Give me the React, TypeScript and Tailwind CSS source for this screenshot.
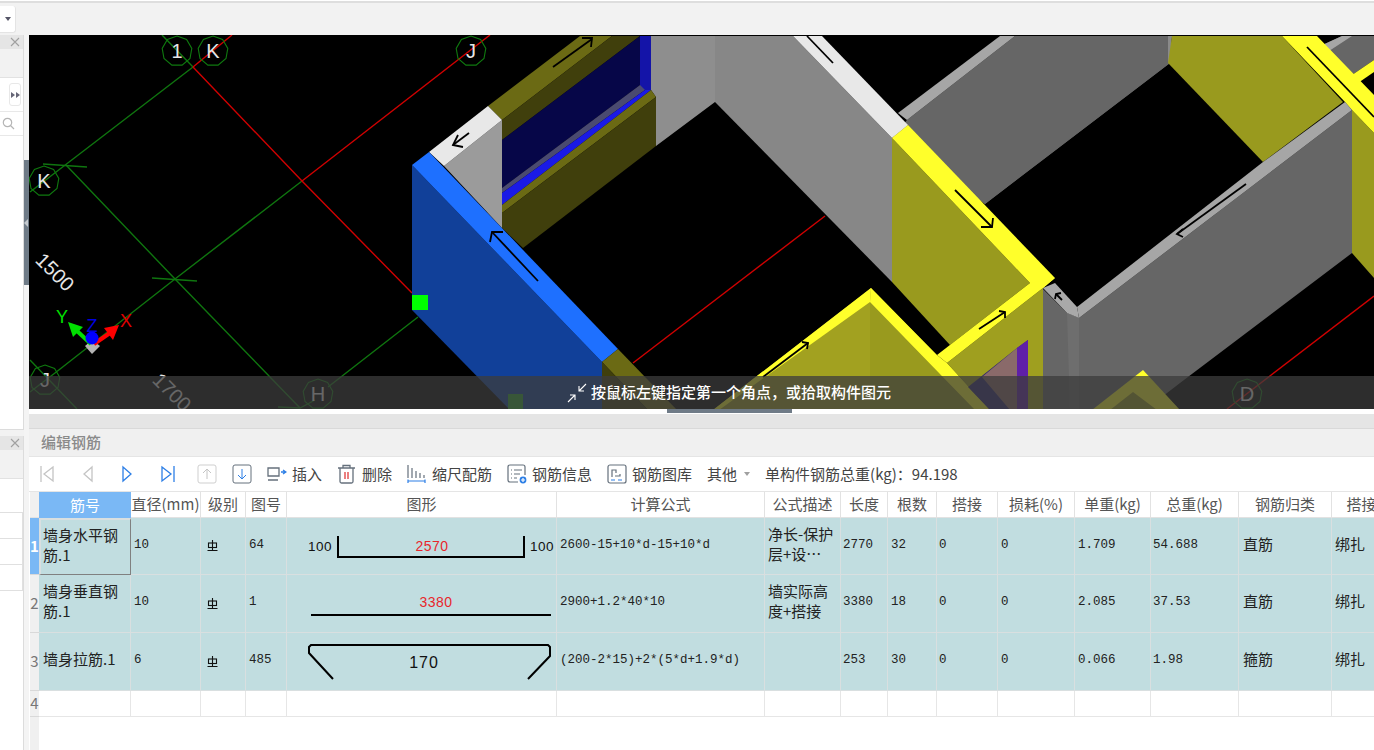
import React from 'react';

const octagon = (cx: number, cy: number, r: number) =>
    Array.from({ length: 9 }, (_, i) => {
        const a = (Math.PI * 2 * i) / 9 - Math.PI / 2;
        return `${(cx + r * Math.cos(a)).toFixed(1)},${(cy + r * Math.sin(a)).toFixed(1)}`;
    }).join(' ');

const greenLines = [
    '162,35 193,67', '193,67 30,192', '302,181 175,279 55,373 30,392', '43,164 87,167', '66,165 175,279 300,408',
    '152,278 197,281', '30,360 77,409', '328,387 418,317', '278,407 300,408 315,400',
];
const redLines = [
    '232,35 193,67', '193,67 302,181 412,293', '302,181 490,35', '633,363 825,216', '1227,409 1374,296',
];
const labels: [number, number, string][] = [
    [177, 51, '1'], [213, 51, 'K'], [471, 51, 'J'], [44, 181, 'K'], [45, 380, 'J'], [318, 394, 'H'], [1247, 394, 'D'],
];

const walls: [string, string][] = [
    // grey walls at the back
    ['651,36 715,36 715,102 656,146 656,97 651,90', '#8e8e8e'],
    ['715,36 793,36 892,138 892,282 715,102', '#878787'],
    ['907,120 1168,36 1170,63 985,204 892,138', '#666666'],
    ['1000,36 1170,36 1170,63 985,204 905,125 907,120 1015,36', '#666666'],
    ['898,113 1000,36 1015,36 907,120', '#a6a6a6'],
    ['1168,36 1172,36 1170,63 1168,63', '#8a8a8a'],
    ['793,36 822,36 908,125 892,138', '#e8e8e8'],
    // olive wall on the right
    ['1172,36 1282,36 1343,102 1263,162 1168,63', '#999a1e'],
    ['1342,36 1374,36 1374,60 1352,75 1318,47', '#666666'],
    ['1318,47 1342,36 1352,36 1326,53', '#a6a6a6'],
    ['1352,110 1374,133 1374,278 1352,253', '#999a1e'],
    ['1282,36 1317,36 1374,95 1374,133 1352,110 1345,102', '#ffff2b'],
    ['1374,60 1352,75 1358,83 1374,72', '#ffff2b'],
    // long grey wall
    ['1079,318 1352,110 1352,253 1180,383 1145,410 1079,410', '#666666'],
    ['1077,307 1263,162 1345,102 1352,110 1079,318', '#a6a6a6'],
    ['1042,288 1067,313 1079,318 1079,410 1042,410', '#666666'],
    ['1067,313 1079,318 1079,410 1070,410', '#6e6e6e'],
    ['1043,288 1055,283 1077,307 1079,318 1067,313', '#a9a9a9'],
    // yellow wall
    ['892,138 1030,283 950,345 892,282', '#999a1e'],
    ['908,125 1055,278 1043,288 1030,283 892,138', '#ffff2b'],
    // lower yellow rooms
    ['871,288 990,410 713,410', '#a2a120'],
    ['870,302 975,410 870,410', '#999a1e'],
    ['947,363 1043,288 1043,410 990,410', '#9f9f1f'],
    ['871,288 713,410 719,410 870,302', '#ffff2b'],
    ['871,288 937,355 947,363 990,410 975,410 870,302', '#ffff2b'],
    ['937,355 1030,283 1055,278 1043,288 947,363', '#ffff2b'],
    ['968,387 1017,348 1028,340 1028,410 990,410', '#2e2570'],
    ['982,377 1017,348 1017,410 1010,410', '#8a6a6a'],
    ['1017,348 1028,340 1028,410 1017,410', '#5f1fa8'],
    ['1143,370 1092,410 1180,410', '#ffff2b'],
    ['1133,392 1110,410 1157,410', '#999a1e'],
    // window wall
    ['488,106 580,36 612,36 502,120', '#6b6a14'],
    ['502,120 612,36 640,36 502,140', '#403f0c'],
    ['502,140 640,36 640,85 502,188', '#060648'],
    ['640,36 651,36 651,90 640,90', '#1414a8'],
    ['502,188 640,85 645,90 502,193', '#4a4a70'],
    ['502,193 645,90 651,90 502,205', '#1a1ae6'],
    ['502,205 651,90 656,97 502,213', '#6b6a14'],
    ['502,213 656,97 656,146 523,248 502,228', '#403f0c'],
    // blue end
    ['444,166 502,120 502,228', '#9b9b9b'],
    ['429,152 488,106 502,120 444,166', '#e8e8e8'],
    ['412,165 602,362 602,410 510,410 412,310', '#114099'],
    ['412,165 429,152 618,349 602,362', '#1e70ff'],
    ['602,362 618,349 677,410 648,410', '#6b6a14'],
    ['602,362 648,410 602,410', '#403f0c'],
];

const arrows = [
    ['553,67 592,39'], ['582,38 592,38 591,47'],
    ['469,133 453,145'], ['458,135 453,145 463,147'],
    ['538,281 492,232'], ['503,232 492,232 490,242'],
    ['807,36 833,63'],
    ['955,190 992,227'], ['993,218 992,227 981,227'],
    ['1246,184 1177,234'], ['1183,229 1177,234 1183,237'],
    ['979,329 1005,312'], ['999,311 1005,312 1005,318'],
    ['763,377 808,343'], ['802,342 808,343 807,349'],
    ['1307,47 1374,117'],
    ['1056,294 1062,300'], ['1055,299 1056,294 1061,293'],
];

const Viewport = () => (
    <div className="relative h-[374px] bg-black overflow-hidden">
        <svg viewBox="29 35 1345 374" className="block w-full h-full">
            {greenLines.map((p) => <polyline key={p} points={p} fill="none" stroke="#0f750f" strokeWidth="1.4" />)}
            {redLines.map((p) => <polyline key={p} points={p} fill="none" stroke="#d00000" strokeWidth="1.4" />)}
            {walls.map(([p, c], i) => <polygon key={i} points={p} fill={c} />)}
            {arrows.map(([p], i) => <polyline key={i} points={p} fill="none" stroke="#000" strokeWidth="1.8" />)}
            <rect x="412" y="295" width="16" height="15" fill="#00ff00" />
            <rect x="508" y="394" width="15" height="16" fill="#2fa52f" />
            {labels.map(([x, y, t]) => (
                <g key={`${x}${t}`}>
                    <polygon points={octagon(x, y, 15)} fill="none" stroke="#0f7a0f" strokeWidth="1.1" />
                    <text x={x} y={y + 7} textAnchor="middle" fontSize="20" fill="#e6e6e6" fontFamily="Liberation Sans">{t}</text>
                </g>
            ))}
            <text x="55" y="279" transform="rotate(45 55 272)" textAnchor="middle" fontSize="20" fill="#e6e6e6" fontFamily="Liberation Sans">1500</text>
            <text x="172" y="399" transform="rotate(45 172 392)" textAnchor="middle" fontSize="20" fill="#e6e6e6" fontFamily="Liberation Sans">1700</text>
            {/* axis gizmo */}
            <polygon points="92,340 100,346 92,354 85,346" fill="#b5b5b5" />
            <line x1="91" y1="344" x2="76" y2="330" stroke="#00e000" strokeWidth="4" />
            <polygon points="68,322 83,327 73,337" fill="#00e000" />
            <line x1="94" y1="344" x2="110" y2="333" stroke="#ff0000" strokeWidth="4" />
            <polygon points="119,325 113,340 104,328" fill="#ff0000" />
            <circle cx="92" cy="338" r="6.5" fill="#0000ff" />
            <text x="62" y="323" textAnchor="middle" fontSize="18" fill="#00e000" fontFamily="Liberation Sans">Y</text>
            <text x="92" y="332" textAnchor="middle" fontSize="18" fill="#0000e0" fontFamily="Liberation Sans">Z</text>
            <text x="126" y="327" textAnchor="middle" fontSize="18" fill="#e00000" fontFamily="Liberation Sans">X</text>
        </svg>
        <div className="absolute left-0 right-0 bottom-0 h-[33px] bg-[#3c3c3c]/75 flex items-center pl-[538px] gap-[4px] text-white text-[15px] font-medium">
            <svg width="20" height="20" viewBox="0 0 20 20" fill="none" stroke="#fff" strokeWidth="1.1">
                <path d="M1 19 L8 12 M3 12 H8 V17 M19 1 L12 8 M12 3 V8 H17" />
            </svg>
            <span>按鼠标左键指定第一个角点，或拾取构件图元</span>
        </div>
    </div>
);

const PanelHead = () => (
    <div className="h-[14px] bg-[#e5e5e5] flex items-center justify-end pr-[3px]">
        <svg width="10" height="10" viewBox="0 0 10 10" stroke="#a0a0a0" strokeWidth="1.1"><path d="M1 1 L9 9 M9 1 L1 9" /></svg>
    </div>
);

const SidePanels = () => (
    <div className="w-[24px] flex flex-col bg-[#f2f2f2] shrink-0">
        <div className="h-[395px] flex flex-col bg-white border-r border-b border-[#dcdcdc]">
            <PanelHead />
            <div className="h-[29px] bg-[#f2f2f2] border-b border-[#e2e2e2]" />
            <div className="h-[34px] border-b border-[#e8e8e8] flex justify-end items-center pr-[2px]">
                <div className="w-[12px] h-[23px] bg-white border border-[#e8e8e8] rounded-[3px] flex items-center justify-center">
                    <svg width="9" height="6" viewBox="0 0 9 6" fill="#667"><path d="M0 0 L4 3 L0 6Z M5 0 L9 3 L5 6Z" /></svg>
                </div>
            </div>
            <div className="h-[24px] border-b border-[#e8e8e8] flex items-center pl-[2px]">
                <svg width="13" height="13" viewBox="0 0 13 13" fill="none" stroke="#b5b5b5" strokeWidth="1.2"><circle cx="5.5" cy="5.5" r="4.2" /><path d="M8.5 8.5 L12 12" /></svg>
            </div>
        </div>
        <div className="mt-[6px] flex-1 flex flex-col bg-white border-r border-[#dcdcdc]">
            <PanelHead />
            <div className="h-[29px] bg-[#f2f2f2] border-b border-[#e2e2e2]" />
            <div className="h-[34px] border-b border-[#e0e0e0]" />
            <div className="h-[26px] border-b border-r border-[#e0e0e0]" />
            <div className="h-[26px] border-b border-r border-[#e0e0e0]" />
            <div className="h-[26px] border-b border-r border-[#e0e0e0]" />
        </div>
    </div>
);

const Splitter = () => (
    <div className="w-[5px] shrink-0 bg-[#f4f4f4]">
        <div className="mt-[125px] h-[125px] bg-[#6f7b87] flex items-center">
            <svg width="5" height="8" viewBox="0 0 5 8" fill="#c4c9ce"><path d="M4 0 V8 L0 4Z" /></svg>
        </div>
    </div>
);

const Tool = ({ icon, label, wide }: any) => (
    <div className={`flex items-center ${wide ? 'gap-[6px]' : 'gap-[5px]'}`}>
        {icon}
        <span>{label}</span>
    </div>
);

const blue = '#2d7fe6';
const off = '#c4c4c4';

const Toolbar = () => (
    <div className="h-[34px] bg-white flex items-center pl-[11px] text-[15px] text-[#444] whitespace-nowrap">
        <svg width="14" height="18" viewBox="0 0 14 18" fill="none" stroke={off} strokeWidth="1.3" className="mr-[29px]"><path d="M1 1 V17 M13 2 L4 9 L13 16Z" /></svg>
        <svg width="10" height="18" viewBox="0 0 10 18" fill="none" stroke={off} strokeWidth="1.3" className="mr-[29px]"><path d="M9 2 L1 9 L9 16Z" /></svg>
        <svg width="10" height="18" viewBox="0 0 10 18" fill="none" stroke={blue} strokeWidth="1.3" className="mr-[29px]"><path d="M1 2 L9 9 L1 16Z" /></svg>
        <svg width="14" height="18" viewBox="0 0 14 18" fill="none" stroke={blue} strokeWidth="1.3" className="mr-[22px]"><path d="M13 1 V17 M1 2 L10 9 L1 16Z" /></svg>
        <svg width="20" height="20" viewBox="0 0 20 20" fill="none" className="mr-[15px]"><rect x="1" y="1" width="18" height="18" rx="2" stroke="#cfcfcf" /><path d="M10 15 V5 M6 9 L10 5 L14 9" stroke={off} /></svg>
        <svg width="20" height="20" viewBox="0 0 20 20" fill="none" className="mr-[15px]"><rect x="1" y="1" width="18" height="18" rx="2" stroke="#65707c" /><path d="M10 5 V15 M6 11 L10 15 L14 11" stroke={blue} /></svg>
        <div className="flex items-center gap-[15px]">
            <Tool
                label="插入"
                icon={<svg width="20" height="18" viewBox="0 0 20 18" fill="none" strokeWidth="1.3"><path d="M6 3 H1 V11 H12 V3 H6 M1 15 H11" stroke="#65707c" /><path d="M14 7 H18 M16 5 L19 7 L16 9" stroke={blue} /></svg>}
            />
            <Tool
                wide
                label="删除"
                icon={<svg width="19" height="20" viewBox="0 0 19 20" fill="none" strokeWidth="1.3" stroke="#65707c"><path d="M1 4 H18 M6 4 V1.5 H13 V4 M3 4 V17.5 Q3 19 4.5 19 H14.5 Q16 19 16 17.5 V4" /><path d="M8 8 V15 M11 8 V15" stroke="#e03c3c" /></svg>}
            />
            <Tool
                wide
                label="缩尺配筋"
                icon={<svg width="19" height="20" viewBox="0 0 19 20" fill="none" strokeWidth="1.2"><path d="M1 1 V14 M5 4 V14 M9 7 V14 M13 9 V14 M17 11 V14" stroke="#65707c" /><path d="M1 17 H18 M1 15.5 V19 M18 15.5 V19" stroke={blue} /></svg>}
            />
            <Tool
                label="钢筋信息"
                icon={<svg width="20" height="20" viewBox="0 0 20 20" fill="none" strokeWidth="1.2"><path d="M11 18 H3 Q1 18 1 16 V3 Q1 1 3 1 H16 Q18 1 18 3 V11" stroke="#65707c" /><path d="M4 6 H5 M7 6 H15 M4 10 H5 M7 10 H13 M4 14 H5 M7 14 H10" stroke="#65707c" /><circle cx="16" cy="16" r="3.4" fill={blue} stroke="none" /><path d="M16 14 V18 M14 16 H18" stroke="#fff" /></svg>}
            />
            <Tool
                label="钢筋图库"
                icon={<svg width="20" height="20" viewBox="0 0 20 20" fill="none" strokeWidth="1.2"><rect x="1" y="1" width="18" height="18" rx="2" stroke="#65707c" /><path d="M5 13 V6 H9 V9 M8 12 H13 V10" stroke="#65707c" /><path d="M4 16 H8 M11 16 H15" stroke={blue} /></svg>}
            />
            <div className="flex items-center gap-[7px]">
                <span>其他</span>
                <svg width="6" height="4" viewBox="0 0 6 4" fill="#a0a0a0"><path d="M0 0 H6 L3 4Z" /></svg>
            </div>
            <span>单构件钢筋总重(kg)：94.198</span>
        </div>
    </div>
);

const GradeMark = () => (
    <svg width="11" height="12" viewBox="0 0 11 12" fill="none" stroke="#111" strokeWidth="1.1">
        <rect x="1.5" y="3" width="8" height="4.5" />
        <path d="M5.5 0 V10 M0.5 10.5 H10.5" />
    </svg>
);

const Figure1 = () => (
    <svg width="270" height="57" viewBox="286 517 270 57" className="shrink-0">
        <text x="307" y="550" fontSize="13.5" letterSpacing="0.5" fill="#111" fontFamily="Liberation Sans">100</text>
        <path d="M337 535 V556 H523 V535" fill="none" stroke="#000" strokeWidth="2" />
        <text x="431" y="550" textAnchor="middle" fontSize="14" letterSpacing="0.5" fill="#e8262c" fontFamily="Liberation Sans">2570</text>
        <text x="529" y="550" fontSize="13.5" letterSpacing="0.5" fill="#111" fontFamily="Liberation Sans">100</text>
    </svg>
);

const Figure2 = () => (
    <svg width="270" height="58" viewBox="286 574 270 58" className="shrink-0">
        <text x="435" y="606" textAnchor="middle" fontSize="14" letterSpacing="0.5" fill="#e8262c" fontFamily="Liberation Sans">3380</text>
        <path d="M310 614 H550" stroke="#000" strokeWidth="2" />
    </svg>
);

const Figure3 = () => (
    <svg width="270" height="58" viewBox="286 632 270 58" className="shrink-0">
        <path d="M332 678 L308 652 L308 646 L310 644 H547 L549 646 L549 655 L527 678" fill="none" stroke="#000" strokeWidth="2" />
        <text x="423" y="667" textAnchor="middle" fontSize="16" letterSpacing="1" fill="#111" fontFamily="Liberation Sans">170</text>
    </svg>
);

const mono = "font-['Liberation_Mono','Noto_Sans_CJK_SC',monospace] text-[12.5px] pb-[2px]";
const cjk = 'text-[15px] leading-[20px] pb-[5px]';

const Cell = ({ children, kind, className = '' }: any) => (
    <div className={`border-r border-b border-[#d9dfe0] bg-[#c1dde0] flex items-center overflow-hidden text-[#222] ${kind === 'cjk' ? cjk : kind === 'fig' ? '' : mono} ${className}`}>
        {children}
    </div>
);

const headers = ['直径(mm)', '级别', '图号', '图形', '计算公式', '公式描述', '长度', '根数', '搭接', '损耗(%)', '单重(kg)', '总重(kg)', '钢筋归类', '搭接'];

const rows = [
    { n: '墙身水平钢筋.1', d: '10', no: '64', fig: <Figure1 />, calc: '2600-15+10*d-15+10*d', desc: '净长-保护层+设…', len: '2770', qty: '32', unit: '1.709', total: '54.688', kind: '直筋' },
    { n: '墙身垂直钢筋.1', d: '10', no: '1', fig: <Figure2 />, calc: '2900+1.2*40*10', desc: '墙实际高度+搭接', len: '3380', qty: '18', unit: '2.085', total: '37.53', kind: '直筋' },
    { n: '墙身拉筋.1', d: '6', no: '485', fig: <Figure3 />, calc: '(200-2*15)+2*(5*d+1.9*d)', desc: '', len: '253', qty: '30', unit: '0.066', total: '1.98', kind: '箍筋' },
];

const Grid = () => (
    <div className="grid grid-cols-[9px_92px_70px_45px_41px_270px_208px_76px_47px_49px_61px_77px_76px_88px_93px_60px] grid-rows-[26px_57px_58px_58px_26px] w-[1400px]">
        <div className="bg-[#f0f0f0] border-b border-[#e2e2e2]" />
        <div className="bg-[#7ab8f5] text-white text-[15px] flex items-center justify-center">筋号</div>
        {headers.map((h, i) => (
            <div key={i} className="bg-white border-r border-b border-[#e2e2e2] text-[15px] text-[#555] flex items-center justify-center whitespace-nowrap">{h}</div>
        ))}

        {rows.map((r, i) => (
            <React.Fragment key={i}>
                <div className={`border-b border-[#d9d9d9] flex items-center justify-center text-[15px] ${i === 0 ? 'bg-[#7ab8f5] text-white font-bold' : 'bg-[#f0f0f0] text-[#777]'}`}>{i + 1}</div>
                <Cell kind="cjk" className={i === 0 ? 'pl-[2px] border-2 border-[#c4d0d2] border-r-[#808080] border-b-[#808080]' : 'pl-[4px]'}>{r.n}</Cell>
                <Cell className="pl-[3px]">{r.d}</Cell>
                <Cell kind="fig" className="pl-[6px]"><GradeMark /></Cell>
                <Cell className="pl-[3px]">{r.no}</Cell>
                <Cell kind="fig">{r.fig}</Cell>
                <Cell className="pl-[3px] whitespace-nowrap">{r.calc}</Cell>
                <Cell kind="cjk" className="pl-[3px]">{r.desc}</Cell>
                <Cell className="pl-[2px]">{r.len}</Cell>
                <Cell className="pl-[3px]">{r.qty}</Cell>
                <Cell className="pl-[2px]">0</Cell>
                <Cell className="pl-[3px]">0</Cell>
                <Cell className="pl-[3px]">{r.unit}</Cell>
                <Cell className="pl-[2px]">{r.total}</Cell>
                <Cell kind="cjk" className="pl-[4px]">{r.kind}</Cell>
                <Cell kind="cjk" className="pl-[3px]">绑扎</Cell>
            </React.Fragment>
        ))}

        <div className="bg-[#f0f0f0] border-b border-[#d9d9d9] flex items-center justify-center text-[15px] text-[#777]">4</div>
        {headers.concat('').map((_, i) => (
            <div key={i} className="bg-white border-r border-b border-[#e6e6e6]" />
        ))}
    </div>
);

export default function App() {
    return (
        <div className="w-[1374px] h-[750px] overflow-hidden flex flex-col bg-white font-['Noto_Sans_CJK_SC','Liberation_Sans',sans-serif]">
            <div className="h-[35px] shrink-0 bg-[#f2f2f2] border-t-2 border-[#dedede] mt-[1px] flex items-center">
                <div className="w-[16px] h-[27px] bg-white rounded-r-[3px] border-r border-b border-[#e4e4e4] flex items-center justify-center">
                    <svg width="6" height="4" viewBox="0 0 6 4" fill="#556"><path d="M0 0 H6 L3 4Z" /></svg>
                </div>
            </div>
            <div className="flex-1 flex min-h-0 -mt-[1px]">
                <SidePanels />
                <Splitter />
                <div className="flex-1 flex flex-col min-w-0 overflow-hidden">
                    <Viewport />
                    <div className="h-[5px] bg-white shrink-0">
                        <div className="ml-[638px] w-[125px] h-[4px] bg-[#6f7b87]" />
                    </div>
                    <div className="h-[15px] shrink-0 bg-[#e5e5e5] border-b border-[#d9d9d9]" />
                    <div className="h-[27px] shrink-0 bg-[#f0f0f0] flex items-center pl-[12px] text-[15px] text-[#8a8a8a] font-medium">编辑钢筋</div>
                    <div className="h-px shrink-0 bg-[#e5e5e5]" />
                    <Toolbar />
                    <div className="h-px shrink-0 bg-[#e5e5e5]" />
                    <div className="flex-1 ml-px overflow-hidden">
                        <Grid />
                        <div className="w-[9px] h-[40px] bg-[#f0f0f0]" />
                    </div>
                </div>
            </div>
        </div>
    );
}
